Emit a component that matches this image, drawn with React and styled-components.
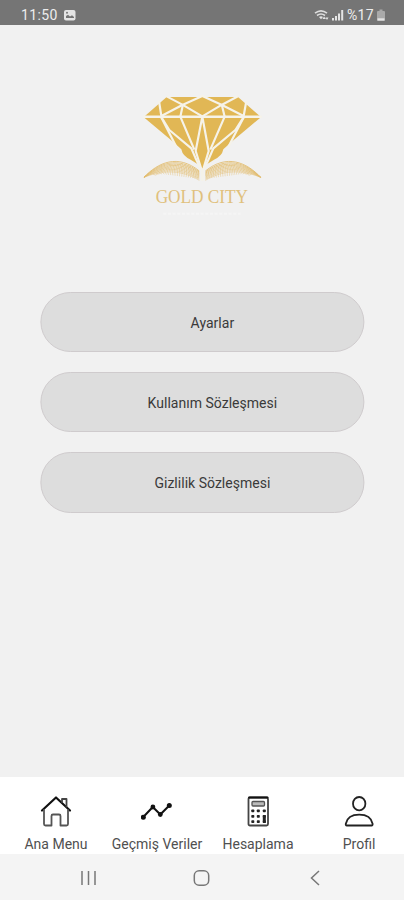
import React from "react";
import styled, { createGlobalStyle } from "styled-components";

const GlobalStyle = createGlobalStyle`
  * { box-sizing: border-box; }
  body { margin: 0; background: #f1f1f1; font-family: Roboto, "Liberation Sans", sans-serif; }
`;
const Screen = styled.div`
  width: 404px;
  height: 900px;
  display: flex;
  flex-direction: column;
  background: #f1f1f1;
  overflow: hidden;
`;
const StatusBar = styled.header`
  height: 25px;
  flex: none;
  background: #757575;
  color: #ededed;
  display: flex;
  align-items: center;
  justify-content: space-between;
  padding: 5px 19px 0 21px;
  font-size: 14px;
  letter-spacing: 0.35px;
`;
const StatusGroup = styled.div`
  display: flex;
  align-items: center;
  gap: ${(p) => p.$gap}px;
`;
const StatusIcon = styled.svg`
  display: block;
  width: ${(p) => p.$width}px;
  height: 12px;
  fill: #e4e4e4;
`;
const Content = styled.main`
  flex: 1;
  display: flex;
  flex-direction: column;
  align-items: center;
`;
const Logo = styled.svg`
  display: block;
  width: 136px;
  height: 140px;
  margin: 60px 0 67px;
`;
const LogoName = styled.text`
  font: 54px "Liberation Serif", serif;
  fill: #e0c07c;
`;
const Menu = styled.nav`
  width: 324px;
  display: flex;
  flex-direction: column;
  gap: 20px;
  transform: translateX(0.4px);
`;
const MenuButton = styled.button`
  height: 60.2px;
  border: 1px solid #cfcbcd;
  border-radius: 30px;
  background: #ddd;
  color: #3a3a3a;
  font: 400 14px Roboto, sans-serif;
  letter-spacing: 0.02px;
  padding: 2px 0 0 20px;
`;
const TabBar = styled.nav`
  height: 77px;
  flex: none;
  background: #fff;
  display: grid;
  grid-template-columns: repeat(4, 101px);
  padding-left: 5.5px;
`;
const Tab = styled.a`
  display: flex;
  flex-direction: column;
  align-items: center;
  padding-top: 18px;
  font-size: 14px;
  color: #505050;
  white-space: nowrap;
`;
const TabIcon = styled.svg`
  display: block;
  width: 32px;
  height: 32px;
  flex: none;
  fill: none;
  stroke: #222;
  stroke-width: 1.8;
  stroke-linejoin: round;
  stroke-linecap: round;
  margin-bottom: 9px;
`;
const SystemBar = styled.footer`
  height: 46px;
  flex: none;
  background: #f4f4f4;
  display: flex;
  align-items: center;
  justify-content: space-between;
  padding: 2px 81px 0 80px;
`;
const SystemIcon = styled.svg`
  width: 17px;
  height: 18px;
  fill: none;
  stroke: #777;
  stroke-width: 1.5;
`;

const steps = Array.from({ length: 9 }, (_, i) => i / 8);
const ribs = Array.from({ length: 19 }, (_, i) => i / 18);

function Wing() {
  return (
    <g fill="none" stroke="#e2bd70">
      {steps.map((t) => (
        <path
          key={t}
          strokeWidth={2.6 - t * 1.2}
          d={`M30 277C72 ${232 + t * 28} 132 ${206 + t * 42} 196 ${258 + t * 28}`}
        />
      ))}
      {ribs.map((t) => {
        const x = 55 + t * 134;
        const top = 264 - Math.sin(t * 2.5) * 34 + t * 10;
        return (
          <path
            key={t}
            strokeWidth="1.3"
            d={`M${x} ${top}Q${x + 10} ${top + 12} ${x + 16 * (1 - t)} ${265 + t * 16}`}
          />
        );
      })}
    </g>
  );
}

function Brand() {
  return (
    <Logo viewBox="0 0 408 420" role="img">
      <Wing />
      <g transform="translate(410 0) scale(-1 1)"><Wing /></g>
      <path d="M205 240V288" stroke="#f4f2ea" strokeWidth="9" />
      <path
        fill="#e1b755"
        d="M98 36H312L378 94V99L292 171L268 193Q264 214 240 224L215 240L205 252L195 240L170 224Q146 214 142 193L118 171L32 99V94Z"
      />
      <g fill="none" stroke="#f6f3e9" strokeWidth="6.5" strokeLinejoin="round">
        <path d="M27 95H383" strokeWidth="7.5" />
        <path d="M75 48L82 93L145 60L205 33L264 60L329 93L337 48" />
        <path d="M98 34L145 59L205 94L264 59L312 34" />
        <path d="M147 58L139 95L181 194M263 58L272 95L229 194" />
        <path d="M81 95L126 184M330 95L284 184" />
        <path d="M81 95L106 135L172 190L184 218L200 252M330 95L304 135L238 190L226 218L210 252" />
        <path d="M205 95L185 198L202 252M205 95L224 198L208 252" />
      </g>
      <LogoName x="65" y="354" textLength="277" lengthAdjust="spacingAndGlyphs">GOLD CITY</LogoName>
      <path d="M88 386H320" stroke="#f5f5f5" strokeWidth="6" strokeDasharray="9 5" />
    </Logo>
  );
}

const tabs = [
  {
    label: "Ana Menu",
    icon: (
      <>
        <path d="M2 15.5L16 2.5L30 15.5" stroke="#111" strokeWidth="2.2" />
        <path d="M22 7V4H26.5V11.5" stroke="#444" />
        <path d="M4 15V29Q4 30.5 5.5 30.5H11.5V21Q11.5 19.5 13 19.5H19Q20.5 19.5 20.5 21V30.5H26.5Q28 30.5 28 29V15" stroke="#555" />
      </>
    ),
  },
  {
    label: "Geçmiş Veriler",
    icon: (
      <>
        <path d="M1.8 22.5L11.8 12L19.3 19.5L28.3 10.5" stroke="#111" strokeWidth="2" />
        <g fill="#111" stroke="none">
          <circle cx="2.3" cy="22.3" r="2.5" />
          <circle cx="11.9" cy="12" r="2.4" />
          <circle cx="19.3" cy="19.5" r="2.4" />
          <circle cx="28.3" cy="10.5" r="2.5" />
        </g>
      </>
    ),
  },
  {
    label: "Hesaplama",
    icon: (
      <>
        <rect x="6.5" y="2.5" width="19.5" height="28" rx="1.5" stroke="#444" />
        <path d="M7 2.5H25.5" stroke="#111" />
        <rect x="10" y="6.5" width="12.5" height="4.5" rx="1" stroke="#555" fill="#bbb" strokeWidth="1.3" />
        <g fill="#222" stroke="none">
          {[14.5, 20, 25.2].flatMap((y) =>
            [9.3, 14.8, 20.8].map((x) => <rect key={`${x}-${y}`} x={x} y={y} width="3" height="2.7" rx=".7" />)
          )}
          <rect x="20.8" y="20" width="3" height="8" rx=".8" />
        </g>
      </>
    ),
  },
  {
    label: "Profil",
    icon: (
      <>
        <ellipse cx="16.2" cy="8.7" rx="6.2" ry="6.7" />
        <path d="M3.8 30.5Q2.5 30.5 2.8 28.8C4 23 9 19.7 16.2 19.7S28.4 23 29.6 28.8Q29.8 30.5 28.6 30.5Z" />
      </>
    ),
  },
];

export default function App() {
  return (
    <Screen>
      <GlobalStyle />
      <StatusBar>
        <StatusGroup $gap={5}>
          11:50
          <StatusIcon $width={13} viewBox="0 0 13 12">
            <rect x="1" y="1" width="11.5" height="10.5" rx="2" />
            <path fill="#757575" d="M3 9V7L5 5.8L7 7.6L9 6.2L11 8V9Z" />
            <circle cx="4" cy="3.7" r="1" fill="#757575" />
          </StatusIcon>
        </StatusGroup>
        <StatusGroup $gap={3}>
          <StatusIcon $width={15} viewBox="0 0 15 12">
            <path d="M1 4.2Q7 -.5 13 4.2M3 6.5Q7 3.5 11 6.5" fill="none" stroke="#ddd" strokeWidth="1.6" />
            <path d="M5 8Q7 6.5 9 8L7 10.3ZM10 7.5L12 10H8.5ZM13 11L11.5 8.5H14.5Z" />
          </StatusIcon>
          <StatusIcon $width={12} viewBox="0 0 12 12">
            <path d="M0 9H2V11.5H0ZM3 7H5V11.5H3ZM6 4.5H8V11.5H6ZM9.2 1H11.2V11.5H9.2Z" />
          </StatusIcon>
          %17
          <StatusIcon $width={8} viewBox="0 0 8 12">
            <path fill="#aaa" d="M2.5 .5H5.5V2H7Q8 2 8 3V11Q8 12 7 12H1Q0 12 0 11V3Q0 2 1 2H2.5Z" />
            <path d="M.5 9.3H7.5V11.5H.5Z" />
          </StatusIcon>
        </StatusGroup>
      </StatusBar>
      <Content>
        <Brand />
        <Menu>
          <MenuButton>Ayarlar</MenuButton>
          <MenuButton>Kullanım Sözleşmesi</MenuButton>
          <MenuButton>Gizlilik Sözleşmesi</MenuButton>
        </Menu>
      </Content>
      <TabBar>
        {tabs.map(({ label, icon }) => (
          <Tab key={label}>
            <TabIcon viewBox="0 0 32 32">{icon}</TabIcon>
            {label}
          </Tab>
        ))}
      </TabBar>
      <SystemBar>
        <SystemIcon viewBox="0 0 17 18"><path d="M2 2V16M8.5 2V16M15 2V16" /></SystemIcon>
        <SystemIcon viewBox="0 0 17 18"><rect x="1.3" y="1.8" width="14.4" height="14.4" rx="4.8" /></SystemIcon>
        <SystemIcon viewBox="0 0 17 18"><path d="M13 2L5.5 9L13 16" /></SystemIcon>
      </SystemBar>
    </Screen>
  );
}
